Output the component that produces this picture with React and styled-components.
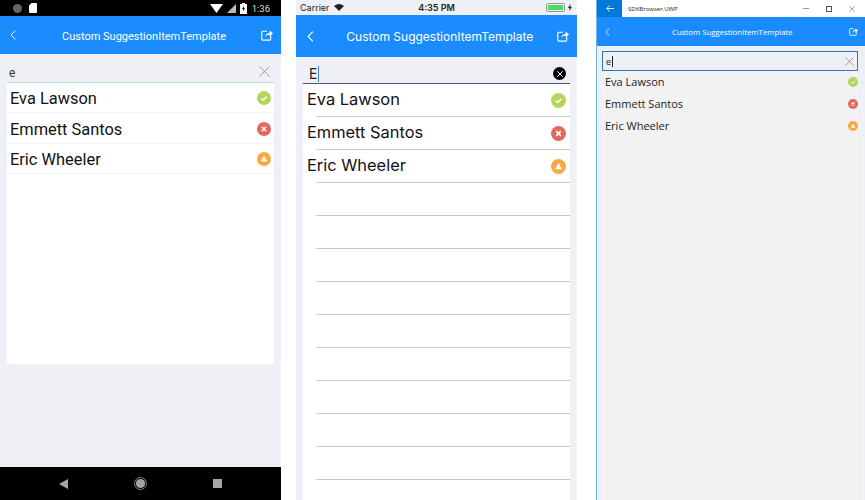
import React from "react";
import styled, { createGlobalStyle } from "styled-components";

const people = [
    { name: "Eva Lawson", status: "ok" },
    { name: "Emmett Santos", status: "busy" },
    { name: "Eric Wheeler", status: "away" },
];

const statusColors = { ok: "#b5d55c", busy: "#e2685c", away: "#fba840" };

function StatusIcon({ status, size }) {
    return (
        <svg width={size} height={size} viewBox="0 0 16 16">
            <circle cx="8" cy="8" r="8" fill={statusColors[status]} />
            {status === "ok" && (
                <path d="M4.8 8.2l2.2 2 4.2-4" fill="none" stroke="#fff" strokeWidth="1.6" />
            )}
            {status === "busy" && (
                <path d="M5.5 5.5l5 5M10.5 5.5l-5 5" fill="none" stroke="#fff" strokeWidth="1.7" />
            )}
            {status === "away" && <path d="M8 4.2l3.8 6.6H4.2z" fill="#fff" />}
        </svg>
    );
}

function BackIcon({ height }) {
    return (
        <svg width={height * 0.6} height={height} viewBox="0 0 6 10">
            <path d="M5.3.6L1 5l4.3 4.4" fill="none" stroke="#fff" strokeWidth="1" />
        </svg>
    );
}

function ShareIcon({ size }) {
    return (
        <svg width={size} height={size} viewBox="0 0 12 12">
            <path
                d="M6 2.2H1.8q-1 0-1 1v6.9q0 1 1 1h6.9q1 0 1-1V6.6"
                fill="none"
                stroke="#fff"
                strokeWidth="1.1"
            />
            <path d="M4.2 7.8Q5 4.4 8.6 3.8V1.5L12 4.6 8.6 7.6V5.4Q6 5.4 4.2 7.8z" fill="#fff" />
        </svg>
    );
}

function CrossIcon({ size, color, weight = 0.9 }) {
    return (
        <svg width={size} height={size} viewBox="0 0 12 12">
            <path d="M.5.5l11 11M11.5.5l-11 11" fill="none" stroke={color} strokeWidth={weight} />
        </svg>
    );
}

function AndroidPhone() {
    return (
        <AndroidScreen>
            <AndroidStatus>
                <CameraDot />
                <svg width="8" height="10" viewBox="0 0 8 10">
                    <path d="M2.5 0H7q1 0 1 1v8q0 1-1 1H1q-1 0-1-1V2.5z" fill="#fff" />
                </svg>
                <StatusSpacer />
                <svg width="13" height="9" viewBox="0 0 13 9">
                    <path d="M0 0h13L6.5 9z" fill="#fff" />
                </svg>
                <svg width="9" height="9" viewBox="0 0 9 9">
                    <path d="M9 0v9H0z" fill="#bbb" />
                </svg>
                <svg width="7" height="11" viewBox="0 0 7 11">
                    <path d="M2 0h3v1h2v10H0V1h2z" fill="#fff" />
                    <path d="M3.8 3L2 6h1.2v2.4L5 5.2H3.8z" fill="#000" />
                </svg>
                <AndroidClock>1:36</AndroidClock>
            </AndroidStatus>
            <AndroidBar>
                <BackIcon height={10} />
                <AndroidTitle>Custom SuggestionItemTemplate</AndroidTitle>
                <ShareIcon size={12} />
            </AndroidBar>
            <AndroidBody>
                <AndroidSearch>
                    <AndroidQuery>e</AndroidQuery>
                    <CrossIcon size={11} color="#8b8b8b" />
                </AndroidSearch>
                <AndroidList>
                    {people.map((p) => (
                        <AndroidRow key={p.name}>
                            <AndroidName>{p.name}</AndroidName>
                            <StatusIcon status={p.status} size={14} />
                        </AndroidRow>
                    ))}
                </AndroidList>
            </AndroidBody>
            <NavBar>
                <svg width="9" height="10" viewBox="0 0 9 10">
                    <path d="M9 0v10L0 5z" fill="#a6a6a6" />
                </svg>
                <svg width="13" height="13" viewBox="0 0 13 13">
                    <circle cx="6.5" cy="6.5" r="6" fill="none" stroke="#a6a6a6" strokeWidth="0.8" />
                    <circle cx="6.5" cy="6.5" r="4.6" fill="#a6a6a6" />
                </svg>
                <NavSquare />
            </NavBar>
        </AndroidScreen>
    );
}

function IosPhone() {
    const blanks = Array.from({ length: 10 }, (_, i) => i);
    return (
        <IosScreen>
            <IosStatus>
                <IosCarrier>
                    Carrier
                    <svg width="10" height="7" viewBox="0 0 10 7">
                        <path d="M5 7L0 2q5-4 10 0z" fill="#222" />
                    </svg>
                </IosCarrier>
                <IosClock>4:35 PM</IosClock>
                <IosBattery>
                    <BatteryShell>
                        <BatteryFill />
                    </BatteryShell>
                    <svg width="4" height="7" viewBox="0 0 4 7">
                        <path d="M2.4 0L0 4h1.6L1.2 7 4 3H2.3z" fill="#222" />
                    </svg>
                </IosBattery>
            </IosStatus>
            <IosBar>
                <BackIcon height={11} />
                <IosTitle>Custom SuggestionItemTemplate</IosTitle>
                <ShareIcon size={12} />
            </IosBar>
            <IosBody>
                <IosSearch>
                    <IosQuery>E</IosQuery>
                    <IosClear>
                        <CrossIcon size={6} color="#fff" weight={2} />
                    </IosClear>
                </IosSearch>
                <IosList>
                    {people.map((p) => (
                        <IosRow key={p.name}>
                            <IosName>{p.name}</IosName>
                            <StatusIcon status={p.status} size={15} />
                        </IosRow>
                    ))}
                    {blanks.map((i) => (
                        <IosRow key={i} />
                    ))}
                </IosList>
            </IosBody>
        </IosScreen>
    );
}

function UwpWindow() {
    return (
        <UwpScreen>
            <TitleBar>
                <TitleBack>
                    <svg width="8" height="7" viewBox="0 0 8 7">
                        <path d="M3.5.5L.8 3.5l2.7 3M.8 3.5H8" fill="none" stroke="#fff" strokeWidth="0.9" />
                    </svg>
                </TitleBack>
                <AppName>SDKBrowser.UWP</AppName>
                <WindowButtons>
                    <MinButton />
                    <MaxButton />
                    <CrossIcon size={6} color="#333" />
                </WindowButtons>
            </TitleBar>
            <UwpBar>
                <BackIcon height={8} />
                <UwpTitle>Custom SuggestionItemTemplate</UwpTitle>
                <ShareIcon size={9} />
            </UwpBar>
            <UwpBody>
                <UwpSearch>
                    <UwpQuery>e</UwpQuery>
                    <CrossIcon size={9} color="#777" />
                </UwpSearch>
                <UwpList>
                    {people.map((p) => (
                        <UwpRow key={p.name}>
                            <UwpName>{p.name}</UwpName>
                            <StatusIcon status={p.status} size={10} />
                        </UwpRow>
                    ))}
                </UwpList>
            </UwpBody>
        </UwpScreen>
    );
}

export default function App() {
    return (
        <>
            <GlobalStyle />
            <Stage>
                <AndroidPhone />
                <IosPhone />
                <UwpWindow />
            </Stage>
        </>
    );
}

const GlobalStyle = createGlobalStyle`
    html, body {
        margin: 0;
        background: #fff;
    }
    * {
        box-sizing: border-box;
    }
`;

const Stage = styled.div`
    display: flex;
    width: 865px;
    height: 500px;
    overflow: hidden;
`;

const Screen = styled.div`
    display: flex;
    flex-direction: column;
    flex: none;
    height: 500px;
    background: #eff0f5;
    overflow: hidden;
`;

const AppBar = styled.div`
    display: flex;
    align-items: center;
    flex: none;
    background: #1a8cff;
    color: #fff;
`;

const Title = styled.div`
    flex: 1;
    text-align: center;
    white-space: nowrap;
`;

/* android */
const AndroidScreen = styled(Screen)`
    width: 281px;
    margin-right: 15px;
    font-family: Roboto, sans-serif;
`;

const AndroidStatus = styled.div`
    display: flex;
    align-items: center;
    gap: 4px;
    flex: none;
    height: 16px;
    padding: 0 11px 0 13px;
    background: #000;
`;

const CameraDot = styled.div`
    width: 9px;
    height: 9px;
    margin-right: 3px;
    border-radius: 50%;
    background: #666;
`;

const StatusSpacer = styled.div`
    flex: 1;
`;

const AndroidClock = styled.span`
    color: #ddd;
    font-size: 9.5px;
    margin-left: 1px;
`;

const AndroidBar = styled(AppBar)`
    height: 38px;
    padding: 0 8px 0 10px;
`;

const AndroidTitle = styled(Title)`
    padding: 2px 0 0 11px;
    font-size: 11px;
`;

const AndroidBody = styled.div`
    flex: 1;
    padding: 6px 7px 0;
`;

const AndroidSearch = styled.div`
    display: flex;
    align-items: center;
    justify-content: space-between;
    height: 23px;
    padding: 0 4px 0 2px;
    border-bottom: 1px solid #b9e3e0;
`;

const AndroidQuery = styled.span`
    padding-top: 3px;
    font-size: 12px;
    color: #333;
`;

const AndroidList = styled.div`
    height: 281px;
    background: #fff;
`;

const AndroidRow = styled.div`
    display: flex;
    align-items: center;
    justify-content: space-between;
    height: 30.4px;
    padding: 1px 3px 0 3px;
    border-bottom: 1px solid #f3f3f3;
    font-size: 16.4px;
    color: #111;
`;

const AndroidName = styled.span`
    margin-top: 1px;
`;

const NavBar = styled.div`
    display: flex;
    align-items: center;
    justify-content: center;
    gap: 66px;
    flex: none;
    height: 33px;
    background: #000;
`;

const NavSquare = styled.div`
    width: 9px;
    height: 9px;
    background: #a6a6a6;
`;

/* ios */
const IosScreen = styled(Screen)`
    width: 281px;
    margin-right: 19px;
    font-family: Inter, sans-serif;
`;

const IosStatus = styled.div`
    display: grid;
    grid-template-columns: 1fr auto 1fr;
    align-items: center;
    flex: none;
    height: 15px;
    padding: 0 4px;
    font-size: 9px;
    color: #222;
`;

const IosCarrier = styled.div`
    display: flex;
    align-items: center;
    gap: 4px;
`;

const IosClock = styled.div`
    font-weight: 600;
`;

const IosBattery = styled.div`
    display: flex;
    align-items: center;
    justify-content: flex-end;
    gap: 3px;
    padding-right: 1px;
`;

const BatteryShell = styled.div`
    width: 19px;
    height: 9px;
    padding: 1px;
    border: 1px solid #999;
    border-radius: 2px;
`;

const BatteryFill = styled.div`
    height: 100%;
    background: #4cd964;
`;

const IosBar = styled(AppBar)`
    height: 42px;
    padding: 0 8px 0 11px;
`;

const IosTitle = styled(Title)`
    padding-left: 9px;
    font-size: 12px;
`;

const IosBody = styled.div`
    flex: 1;
    padding: 7px 7px 0;
`;

const IosSearch = styled.div`
    display: flex;
    align-items: center;
    justify-content: space-between;
    height: 20px;
    padding: 0 4px 0 6px;
    border-bottom: 1px solid #49597a;
`;

const IosQuery = styled.span`
    padding-right: 1px;
    border-right: 1px solid #3c7dd9;
    font-size: 14px;
    line-height: 16px;
    color: #222;
`;

const IosClear = styled.div`
    display: flex;
    align-items: center;
    justify-content: center;
    width: 13px;
    height: 13px;
    border-radius: 50%;
    background: #000;
`;

const IosList = styled.div`
    background: #fff;
`;

const IosRow = styled.div`
    position: relative;
    display: flex;
    align-items: center;
    justify-content: space-between;
    height: 33px;
    padding: 0 4px 1px;
    font-size: 16.4px;
    color: #111;

    &::after {
        content: "";
        position: absolute;
        left: 13px;
        right: 0;
        bottom: 0;
        height: 1px;
        background: #c8c8c8;
    }
`;

const IosName = styled.span`
    margin-bottom: 3px;
`;

/* uwp */
const UwpScreen = styled(Screen)`
    width: 269px;
    border-left: 1px solid #6cb3ec;
    font-family: "Open Sans", sans-serif;
`;

const TitleBar = styled.div`
    display: flex;
    align-items: center;
    flex: none;
    height: 17px;
    background: #fff;
`;

const TitleBack = styled.div`
    display: flex;
    align-items: center;
    justify-content: center;
    width: 25px;
    height: 100%;
    background: #0078d7;
`;

const AppName = styled.span`
    margin-left: 6px;
    font-size: 6px;
    color: #222;
`;

const WindowButtons = styled.div`
    display: flex;
    align-items: center;
    gap: 17px;
    margin-left: auto;
    padding-right: 10px;
`;

const MinButton = styled.div`
    width: 6px;
    height: 1px;
    background: #999;
`;

const MaxButton = styled.div`
    width: 6px;
    height: 6px;
    border: 1px solid #555;
`;

const UwpBar = styled(AppBar)`
    height: 29px;
    padding: 0 7px 0 8px;
`;

const UwpTitle = styled(Title)`
    padding-left: 6px;
    font-size: 7.8px;
`;

const UwpBody = styled.div`
    flex: 1;
    padding: 5px 7px 0 5px;
`;

const UwpSearch = styled.div`
    display: flex;
    align-items: center;
    justify-content: space-between;
    height: 20px;
    padding: 0 3px;
    border: 1px solid #2a7ab8;
`;

const UwpQuery = styled.span`
    padding-right: 1px;
    border-right: 1px solid #222;
    font-size: 9px;
    line-height: 11px;
    color: #222;
`;

const UwpList = styled.div`
    height: 430px;
    background: #f2f2f2;
`;

const UwpRow = styled.div`
    display: flex;
    align-items: center;
    justify-content: space-between;
    height: 22px;
    padding: 0 0 1px 3px;
    font-size: 11px;
    color: #222;
`;

const UwpName = styled.span`
    margin-bottom: 1px;
`;
